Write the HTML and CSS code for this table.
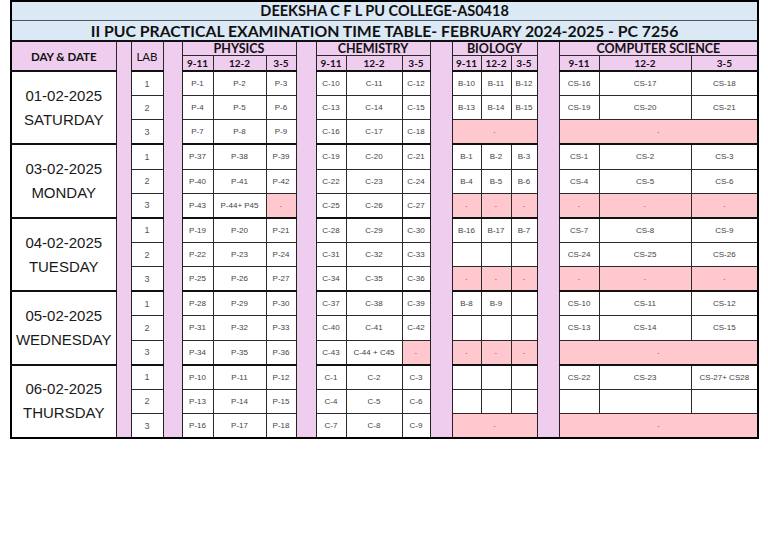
FILE: index.html
```html
<!DOCTYPE html>
<html>
<head>
<meta charset="utf-8">
<link rel="stylesheet" href="styles.css">
</head>
<body>
<table class="tt">
<colgroup>
<col style="width:105px"><col style="width:15px"><col style="width:32px"><col style="width:19px">
<col style="width:31px"><col style="width:53px"><col style="width:30px"><col style="width:20px">
<col style="width:30px"><col style="width:56px"><col style="width:28px"><col style="width:22px">
<col style="width:29px"><col style="width:30px"><col style="width:26px"><col style="width:22px">
<col style="width:40px"><col style="width:92px"><col style="width:67px">
</colgroup>
<tr class="r-t1"><td colspan="19" class="title1">DEEKSHA C F L PU COLLEGE-AS0418</td></tr>
<tr class="r-t2"><td colspan="19" class="title2">II PUC PRACTICAL EXAMINATION TIME TABLE- FEBRUARY 2024-2025 - PC 7256</td></tr>
<tr class="r-h1">
<td rowspan="2" class="hd hb">DAY &amp; DATE</td>
<td rowspan="17" class="sp"></td>
<td rowspan="2" class="hd hl">LAB</td>
<td rowspan="17" class="sp"></td>
<td colspan="3" class="hd hs">PHYSICS</td>
<td rowspan="17" class="sp"></td>
<td colspan="3" class="hd hs">CHEMISTRY</td>
<td rowspan="17" class="sp"></td>
<td colspan="3" class="hd hs">BIOLOGY</td>
<td rowspan="17" class="sp"></td>
<td colspan="3" class="hd hs">COMPUTER SCIENCE</td>
</tr>
<tr class="r-h2">
<td class="hd ht">9-11</td><td class="hd ht">12-2</td><td class="hd ht">3-5</td>
<td class="hd ht">9-11</td><td class="hd ht">12-2</td><td class="hd ht">3-5</td>
<td class="hd ht">9-11</td><td class="hd ht">12-2</td><td class="hd ht">3-5</td>
<td class="hd ht">9-11</td><td class="hd ht">12-2</td><td class="hd ht">3-5</td>
</tr>

<tr class="r g"><td rowspan="3" class="day">01-02-2025<br>SATURDAY</td><td class="n">1</td>
<td>P-1</td><td>P-2</td><td>P-3</td><td>C-10</td><td>C-11</td><td>C-12</td>
<td>B-10</td><td>B-11</td><td>B-12</td><td>CS-16</td><td>CS-17</td><td>CS-18</td></tr>
<tr class="r"><td class="n">2</td>
<td>P-4</td><td>P-5</td><td>P-6</td><td>C-13</td><td>C-14</td><td>C-15</td>
<td>B-13</td><td>B-14</td><td>B-15</td><td>CS-19</td><td>CS-20</td><td>CS-21</td></tr>
<tr class="r"><td class="n">3</td>
<td>P-7</td><td>P-8</td><td>P-9</td><td>C-16</td><td>C-17</td><td>C-18</td>
<td colspan="3" class="x">-</td><td colspan="3" class="x">-</td></tr>

<tr class="r g"><td rowspan="3" class="day">03-02-2025<br>MONDAY</td><td class="n">1</td>
<td>P-37</td><td>P-38</td><td>P-39</td><td>C-19</td><td>C-20</td><td>C-21</td>
<td>B-1</td><td>B-2</td><td>B-3</td><td>CS-1</td><td>CS-2</td><td>CS-3</td></tr>
<tr class="r"><td class="n">2</td>
<td>P-40</td><td>P-41</td><td>P-42</td><td>C-22</td><td>C-23</td><td>C-24</td>
<td>B-4</td><td>B-5</td><td>B-6</td><td>CS-4</td><td>CS-5</td><td>CS-6</td></tr>
<tr class="r"><td class="n">3</td>
<td>P-43</td><td>P-44+ P45</td><td class="x">-</td><td>C-25</td><td>C-26</td><td>C-27</td>
<td class="x">-</td><td class="x">-</td><td class="x">-</td><td class="x">-</td><td class="x">-</td><td class="x">-</td></tr>

<tr class="r g"><td rowspan="3" class="day">04-02-2025<br>TUESDAY</td><td class="n">1</td>
<td>P-19</td><td>P-20</td><td>P-21</td><td>C-28</td><td>C-29</td><td>C-30</td>
<td>B-16</td><td>B-17</td><td>B-7</td><td>CS-7</td><td>CS-8</td><td>CS-9</td></tr>
<tr class="r"><td class="n">2</td>
<td>P-22</td><td>P-23</td><td>P-24</td><td>C-31</td><td>C-32</td><td>C-33</td>
<td></td><td></td><td></td><td>CS-24</td><td>CS-25</td><td>CS-26</td></tr>
<tr class="r"><td class="n">3</td>
<td>P-25</td><td>P-26</td><td>P-27</td><td>C-34</td><td>C-35</td><td>C-36</td>
<td class="x">-</td><td class="x">-</td><td class="x">-</td><td class="x">-</td><td class="x">-</td><td class="x">-</td></tr>

<tr class="r g"><td rowspan="3" class="day">05-02-2025<br>WEDNESDAY</td><td class="n">1</td>
<td>P-28</td><td>P-29</td><td>P-30</td><td>C-37</td><td>C-38</td><td>C-39</td>
<td>B-8</td><td>B-9</td><td></td><td>CS-10</td><td>CS-11</td><td>CS-12</td></tr>
<tr class="r"><td class="n">2</td>
<td>P-31</td><td>P-32</td><td>P-33</td><td>C-40</td><td>C-41</td><td>C-42</td>
<td></td><td></td><td></td><td>CS-13</td><td>CS-14</td><td>CS-15</td></tr>
<tr class="r"><td class="n">3</td>
<td>P-34</td><td>P-35</td><td>P-36</td><td>C-43</td><td>C-44 + C45</td><td class="x">-</td>
<td class="x">-</td><td class="x">-</td><td class="x">-</td><td colspan="3" class="x">-</td></tr>

<tr class="r g"><td rowspan="3" class="day">06-02-2025<br>THURSDAY</td><td class="n">1</td>
<td>P-10</td><td>P-11</td><td>P-12</td><td>C-1</td><td>C-2</td><td>C-3</td>
<td></td><td></td><td></td><td>CS-22</td><td>CS-23</td><td>CS-27+ CS28</td></tr>
<tr class="r"><td class="n">2</td>
<td>P-13</td><td>P-14</td><td>P-15</td><td>C-4</td><td>C-5</td><td>C-6</td>
<td></td><td></td><td></td><td></td><td></td><td></td></tr>
<tr class="r"><td class="n">3</td>
<td>P-16</td><td>P-17</td><td>P-18</td><td>C-7</td><td>C-8</td><td>C-9</td>
<td colspan="3" class="x">-</td><td colspan="3" class="x">-</td></tr>
</table>
</body>
</html>
```

FILE: styles.css
```css
html, body {
  margin: 0;
  padding: 0;
  background: #ffffff;
}
body {
  padding-left: 10px;
  font-family: "Liberation Sans", Arial, sans-serif;
}
.tt {
  border-collapse: collapse;
  table-layout: fixed;
  width: 747px;
  border: 2px solid #000;
}
.tt td {
  border: 1px solid #2a2a2a;
  padding: 0;
  text-align: center;
  vertical-align: middle;
  font-size: 8px;
  color: #444;
  overflow: hidden;
  white-space: nowrap;
}
.tt .r-t1 td, .tt .r-t2 td {
  background: #dbe8f5;
  color: #111;
  font-family: Lato, "Liberation Sans", sans-serif;
  font-weight: 700;
  border-color: #555;
}
.tt .r-t1 td { height: 18px; font-size: 14.5px; line-height: 18px; }
.tt .r-t2 td { height: 19px; font-size: 15.8px; line-height: 19px; border-bottom: 2px solid #111; }
.tt .r-h1 td { height: 13px; }
.tt .r-h2 td { height: 14px; border-bottom: 2px solid #111; }
.tt td.hd {
  background: #efcdee;
  color: #111;
  font-family: Lato, "Liberation Sans", sans-serif;
}
.tt td.hb { font-weight: 700; font-size: 11.5px; }
.tt td.hl { font-weight: 400; font-size: 11.5px; }
.tt td.hs { font-weight: 700; font-size: 12.5px; line-height: 13px; }
.tt td.ht { font-weight: 700; font-size: 10px; line-height: 13px; }
.tt td.sp {
  background: #efcdee;
  border-color: #222;
}
.tt .r td { height: 23.15px; }
.tt tr.g td { border-top: 2px solid #111; }
.tt td.day {
  font-size: 15px;
  line-height: 24px;
  color: #1a1a1a;
  white-space: normal;
}
.tt td.n {
  font-size: 9px;
  color: #555;
}
.tt td.x {
  background: #ffc7ce;
  color: #c0504d;
  font-size: 7px;
}
```
